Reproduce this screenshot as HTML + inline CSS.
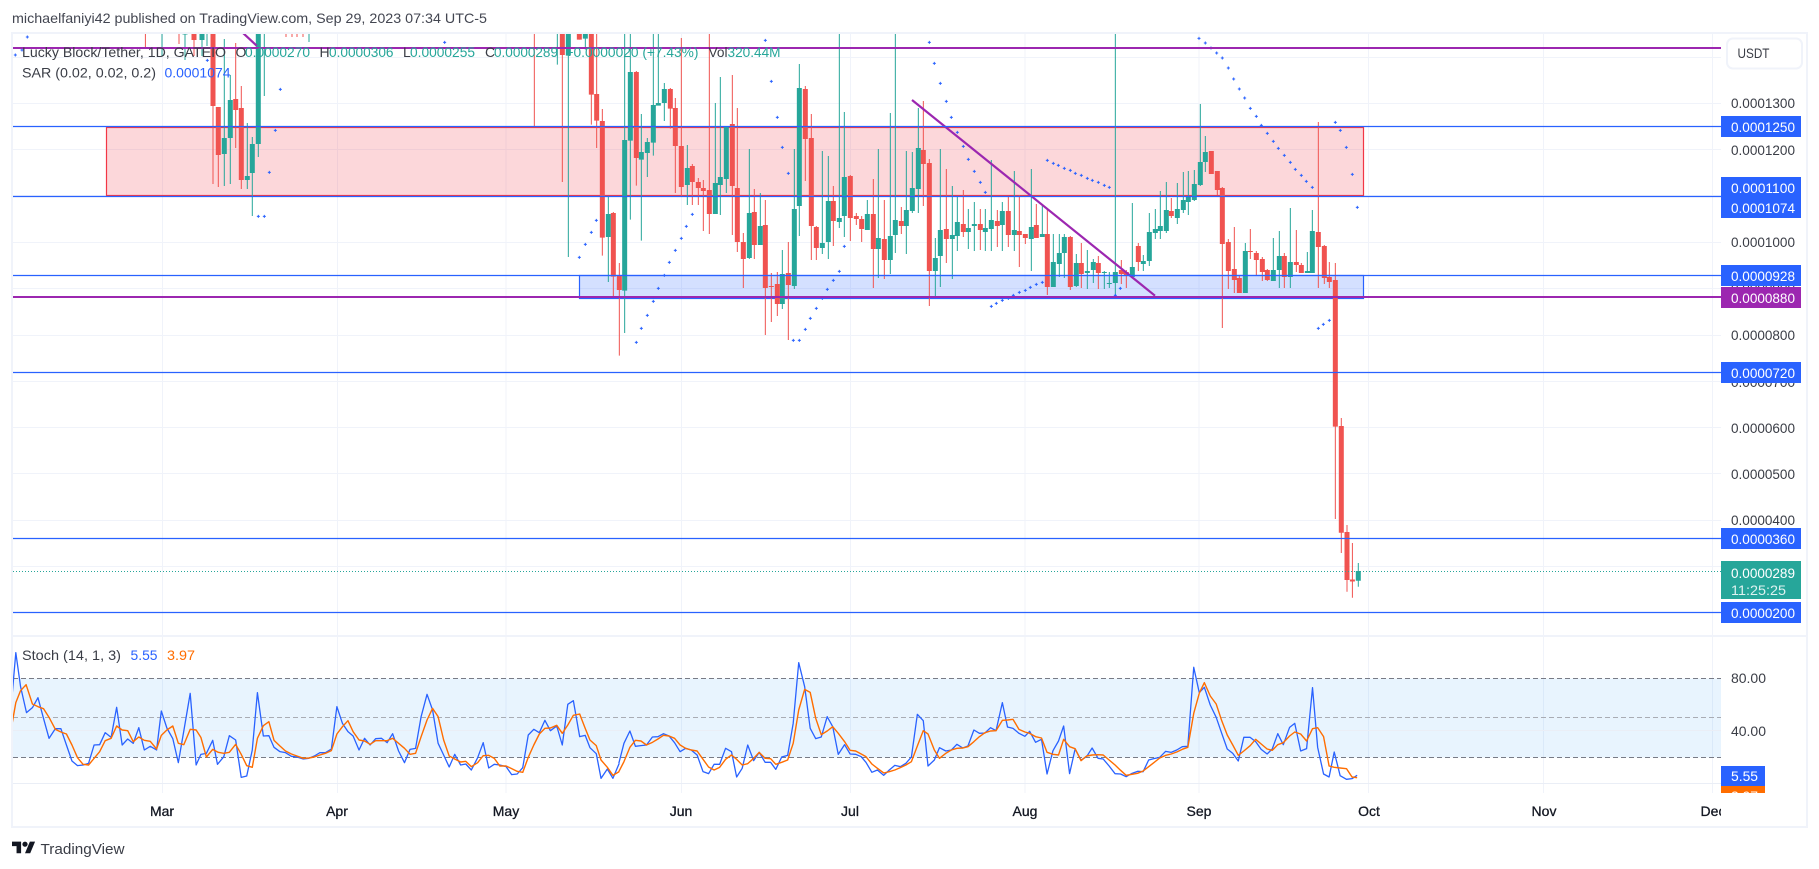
<!DOCTYPE html>
<html lang="en">
<head>
<meta charset="utf-8">
<title>Lucky Block/Tether chart</title>
<style>
html,body{margin:0;padding:0;background:#fff;width:1819px;height:869px;overflow:hidden}
svg{display:block}
text{font-family:"Liberation Sans",sans-serif;font-size:14px}
.ax{fill:#3a3d46}
.lb{fill:#fff}
.tm{fill:#131722;text-anchor:middle;stroke:#131722;stroke-width:.3}
.lg{fill:#3a3d46}
.gn{fill:#26a69a}
.c{fill:none}
.w{stroke-width:3}
.b{stroke-width:15}
.g{stroke:#26a69a}
.r{stroke:#f05350}
.d{fill:none;stroke:none;marker-start:url(#p);marker-mid:url(#p);marker-end:url(#p)}
.sb{fill:none;stroke:#2962ff;stroke-width:1.3;vector-effect:non-scaling-stroke;stroke-linejoin:round}
.so{fill:none;stroke:#ff6d00;stroke-width:1.4;vector-effect:non-scaling-stroke;stroke-linejoin:round}
</style>
</head>
<body>
<svg width="1819" height="869" viewBox="0 0 1819 869" xmlns="http://www.w3.org/2000/svg">
<defs>
<marker id="p" markerUnits="userSpaceOnUse" markerWidth="12" markerHeight="12" refX="6" refY="6" viewBox="0 0 12 12"><path d="M1.5 6h9M6 1.5v9" stroke="#2962ff" stroke-width="3" fill="none"/></marker>
<clipPath id="cp"><rect x="13" y="34" width="1708" height="601"/></clipPath>
<clipPath id="st"><rect x="13" y="637" width="1708" height="156"/></clipPath>
<clipPath id="dec"><rect x="1690" y="795" width="31" height="30"/></clipPath>
<clipPath id="or"><rect x="1721" y="786" width="44" height="7"/></clipPath>
</defs>

<rect width="1819" height="869" fill="#fff"/>

<text x="12" y="23" fill="#434651" textLength="475" lengthAdjust="spacingAndGlyphs">michaelfaniyi42 published on TradingView.com, Sep 29, 2023 07:34 UTC-5</text>

<!-- grid -->
<g stroke="#f0f3fa" stroke-width="1" fill="none">
<path d="M162.5 34V635M337.5 34V635M506 34V635M681.5 34V635M850.5 34V635M1025 34V635M1199 34V635M1368.5 34V635M1543.5 34V635M1712.5 34V635"/>
<path d="M162.5 637V793M337.5 637V793M506 637V793M681.5 637V793M850.5 637V793M1025 637V793M1199 637V793M1368.5 637V793M1543.5 637V793M1712.5 637V793"/>
<path d="M13 57.5H1721M13 103.5H1721M13 149.5H1721M13 195.5H1721M13 242.5H1721M13 288.5H1721M13 335.5H1721M13 381.5H1721M13 427.5H1721M13 473.5H1721M13 520.5H1721M13 566.5H1721"/>
</g>

<g clip-path="url(#cp)">
<!-- filled zones sit beneath the candles -->
<rect x="106.5" y="127.5" width="1257" height="68" fill="#f23645" fill-opacity=".2" stroke="#f23645" stroke-width="1.2"/>
<rect x="579.5" y="275.5" width="784" height="23" fill="#2962ff" fill-opacity=".2" stroke="#2962ff" stroke-width="1.2"/>

<!-- candles -->
<g fill="none">
<path stroke="#f05350" stroke-width="1" d="M145.4 33V49M179 33V44M194 33V56M213 33V184M218.3 107V187M235.7 43V148M241.3 86V189M286 33V37M292 33V37M297 33V37M303 33V37M1341.3 418V553M1347 525V591.7M1352.4 543V597.7"/>
<path stroke="#26a69a" stroke-width="1" d="M162 33V56M185 33V60M202 33V56M207 33V46M224.3 39V186M230.3 75V184M247.3 123V189M252.3 137V216M258.3 33V157M264.3 33V96M309 33V42M1358.3 563V586.7"/>
<path stroke="#f05350" stroke-width="5" d="M194 33V40M213 33V106M218.3 107V155M235.7 99V110M241.3 108V180M1341.3 426V532.7M1347 532V580M1352.4 579.5V581.5"/>
<path stroke="#26a69a" stroke-width="5" d="M185 33V34.5M202 33V40M224.3 138V154M230.3 100V138M247.3 176V180M252.3 144V173M258.3 33V144M1358.3 571V580.7"/>
</g>
<g transform="translate(530,33) scale(.33333)" class="c">
<path class="w g" d="M82 0V95M115 0V672M166 0V50M235 490V747M284 0V900M301 0V560M334 243V623M352 315V432M370 0V368M385 0V215M403 150V264M472 336V516M556 210V543M571 132V546M589 282V480M658 348V678M691 480V636M757 651V828M793 348V768M808 93V609M877 354V663M895 369V678M928 0V585M943 237V612"/>
<path class="w r" d="M13 0V280M97 0V447M148 0V20M184 0V275M200 0V345M217 228V668M250 537V790M268 690V968M319 114V458M421 165V287M436 195V480M454 15V490M487 393V516M505 435V516M520 441V594M538 0V603M607 126V606M622 225V657M640 600V765M673 468V678M706 501V906M724 720V867M742 717V849M775 627V921M826 159V444M844 243V681M859 579V681M910 459V639M961 426V624M979 540V576"/>
<path class="b g" d="M115 0V68M166 0V17M235 543V612M284 321V773M301 117V323M334 357V380M352 327V360M370 216V329M385 210V218M403 168V210M472 405V456M556 450V543M571 432V456M589 282V438M658 540V675M691 579V636M757 723V813M793 528V759M808 165V519M877 630V645M895 504V627M928 555V567M943 432V549"/>
<path class="b r" d="M97 0V66M148 0V20M184 0V185M200 183V263M217 264V614M250 540V731M268 726V771M319 117V375M421 168V227M436 225V339M454 339V462M487 399V447M505 447V465M520 465V474M538 471V543M607 273V459M622 465V627M640 627V678M673 537V636M706 576V765M724 759V762M742 753V813M775 720V756M826 168V318M844 315V579M859 582V645M910 504V564M961 429V555M979 549V558"/>
</g>
<g transform="translate(860,33) scale(.33333)" class="c">
<path class="w g" d="M22 501V591M55 348V735M91 240V723M106 0V660M139 354V663M157 357V540M175 225V540M226 615V789M241 348V762M277 459V738M292 490V654M325 528V648M343 507V654M376 528V654M394 381V654M427 507V654M463 414V654M514 408V714M547 519V612M580 603V762M598 603V732M613 603V735M649 663V762M682 651V768M700 678V750M733 714V768M748 717V765M766 0V792M817 510V735M850 666V714M868 540V699M886 528V618M901 474V618M919 447V600M952 450V573M985 414V546"/>
<path class="w r" d="M5 549V627M40 438V765M73 501V738M124 522V603M190 204V519M208 378V819M259 408V690M310 471V612M361 528V651M412 531V642M445 491V642M478 486V702M496 603V633M529 513V615M562 530V786M631 609V771M664 630V765M715 669V768M784 681V753M799 711V765M835 630V714M934 495V555"/>
<path class="b g" d="M22 543V591M55 615V648M91 609V681M106 561V606M139 531V579M157 465V534M175 345V468M226 675V714M241 591V669M277 606V618M292 567V609M325 585V597M343 573V579M376 585V597M394 561V588M427 534V576M463 591V606M514 582V618M547 603V612M580 687V762M598 660V693M613 612V660M649 690V759M682 714V720M700 687V711M733 717V720M748 750V753M766 717V750M817 702V732M850 684V693M868 597V684M886 588V600M901 579V594M919 531V594M952 528V555M985 489V507"/>
<path class="b r" d="M5 558V588M40 543V648M73 618V681M124 564V579M190 351V393M208 390V714M259 588V618M310 573V597M361 573V591M412 564V579M445 534V606M478 594V606M496 603V615M529 576V615M562 603V762M631 612V762M664 690V723M715 690V720M784 711V723M799 717V729M835 639V687M934 534V549"/>
</g>
<g transform="translate(1180,100) scale(.33333)" class="c">
<path class="w g" d="M10 216V339M43 210V303M61 12V258M76 108V216M196 429V579M280 414V543M298 393V564M331 324V564M382 456V519M397 330V519"/>
<path class="w r" d="M94 153V222M112 213V285M127 261V684M145 417V567M163 381V579M178 528V579M211 387V477M229 453V525M247 471V543M262 507V543M313 459V564M349 390V516M364 489V519M415 66V564M433 435V552M448 486V564M466 489V1257"/>
<path class="b g" d="M10 300V330M43 252V300M61 186V255M76 156V186M196 453V579M280 510V543M298 468V510M331 486V531M382 513V519M397 393V519"/>
<path class="b r" d="M94 153V222M112 213V270M127 264V432M145 426V513M163 507V540M178 534V579M211 453V456M229 459V480M247 477V516M262 510V540M313 468V531M349 486V495M364 495V519M415 396V441M433 438V534M448 531V546M466 540V980"/>
</g>

<!-- SAR -->
<g transform="scale(.33333)"><path class="d" d="M82 111 46 165 66 150 1334 127 3597 115 3616 129 3633 144 3650 159 3667 174 3685 204 3701 237 3718 267 3734 294"/></g>
<g transform="translate(200,33) scale(.33333)"><path class="d" d="M241 169 226 292 208 418 175 550 193 550 22 82"/></g>
<g transform="translate(530,33) scale(.33333)"><path class="d" d="M706 22 724 145 742 253 757 343 775 421 199 562 184 598 166 634 148 673 403 727 385 766 370 805 352 847 334 886 319 928 487 544 469 580 454 616 436 652 418 688 943 640 928 715 910 742 892 769 877 796 859 826 841 856 826 889 808 922 790 922"/></g>
<g transform="translate(860,33) scale(.33333)"><path class="d" d="M208 28 223 91 241 151 259 205 274 253 292 298 310 340 325 379 343 415 361 448 376 478 562 382 580 391 595 397 613 406 631 412 646 421 664 427 682 436 697 442 715 448 733 457 748 463 781 766 766 787 547 748 529 754 511 763 496 772 478 778 460 787 445 796 427 802 409 811 394 820"/></g>
<g transform="translate(1180,100) scale(.33333)"><path class="d" d="M211 25 229 49 244 76 262 100 280 124 295 145 313 166 331 187 346 208 364 226 379 244 397 262 466 67 481 91 499 142 517 223 532 322 415 685 430 673 448 661"/></g>

<!-- trend line -->
<path d="M912 100 1155 295.7M243 33 256.7 45.7" stroke="#9c27b0" stroke-width="2.2" fill="none"/>
</g>

<g fill="none">
<path d="M13 126.5H1721M13 196.5H1721M13 275.5H1721M13 372.5H1721M13 538.5H1721M13 612.5H1721" stroke="#2962ff" stroke-width="1.2"/>
<path d="M13 48H1721M13 297H1721" stroke="#9c27b0" stroke-width="2"/>
<path d="M13 571.5H1721" stroke="#26a69a" stroke-width="1" stroke-dasharray="1 2"/>
</g>

<!-- legend -->
<text x="22" y="57" class="lg" textLength="204" lengthAdjust="spacingAndGlyphs">Lucky Block/Tether, 1D, GATEIO</text>
<text x="235.5" y="57" class="lg">O</text><text x="245" y="57" class="gn" textLength="65" lengthAdjust="spacingAndGlyphs">0.0000270</text>
<text x="319.5" y="57" class="lg">H</text><text x="329" y="57" class="gn" textLength="64.5" lengthAdjust="spacingAndGlyphs">0.0000306</text>
<text x="403" y="57" class="lg">L</text><text x="410" y="57" class="gn" textLength="65" lengthAdjust="spacingAndGlyphs">0.0000255</text>
<text x="485" y="57" class="lg">C</text><text x="494" y="57" class="gn" textLength="64" lengthAdjust="spacingAndGlyphs">0.0000289</text>
<text x="565.5" y="57" class="gn" textLength="133" lengthAdjust="spacingAndGlyphs">+0.0000020 (+7.43%)</text>
<text x="708.5" y="57" class="lg" textLength="19" lengthAdjust="spacingAndGlyphs">Vol</text><text x="727.5" y="57" class="gn" textLength="53" lengthAdjust="spacingAndGlyphs">320.44M</text>
<text x="22" y="77.5" class="lg" textLength="134" lengthAdjust="spacingAndGlyphs">SAR (0.02, 0.02, 0.2)</text>
<text x="164.5" y="77.5" fill="#2962ff" textLength="66" lengthAdjust="spacingAndGlyphs">0.0001074</text>

<!-- stoch pane -->
<rect x="13" y="678.5" width="1708" height="79" fill="#2196f3" fill-opacity=".1"/>
<path d="M13 730.5H1721M13 783.5H1721" stroke="#eaeef6" stroke-width="1" fill="none"/>
<path d="M13 678.5H1721M13 757.5H1721" stroke="#787b86" stroke-width="1" stroke-dasharray="5 3" fill="none"/>
<path d="M13 717.5H1721" stroke="#a9acb4" stroke-width="1" stroke-dasharray="5 3" fill="none"/>
<g clip-path="url(#st)">
<g transform="translate(0,630) scale(.39541,.33333)">
<polyline class="sb" points="30,205 40,68 52,170 67,248 82,233 96,203 110,265 124,325 140,296 154,296 168,345 182,393 196,407 210,405 224,400 238,345 252,344 266,308 281,322 295,232 309,345 323,327 337,340 351,293 365,360 380,349 396,360 408,243 422,294 437,326 451,398 465,302 481,190 496,405 508,373 522,370 538,331 550,403 566,380 580,317 596,330 610,442 624,438 638,360 651,188 666,318 680,317 693,352 708,365 722,368 737,379 751,381 767,387 781,385 795,378 809,368 823,368 838,357 852,230 866,280 880,305 893,318 908,360 922,325 936,345 950,326 965,325 979,338 993,311 1008,363 1023,398 1037,358 1051,355 1065,260 1080,193 1094,240 1108,340 1122,375 1136,411 1150,373 1165,405 1178,402 1192,420 1208,383 1222,338 1236,414 1250,403 1264,405 1280,410 1294,434 1308,432 1322,413 1336,315 1350,298 1364,308 1378,271 1392,302 1408,288 1422,345 1436,223 1450,212 1466,320 1480,316 1492,353 1508,371 1520,445 1536,417 1550,445 1566,400"/>
<polyline class="so" points="30,285 40,218 52,182 66,164 82,222 96,230 110,236 124,262 140,298 154,306 168,312 182,345 196,383 210,403 224,405 238,385 252,365 266,332 281,325 295,288 309,300 323,302 337,335 351,321 365,331 380,334 396,357 408,316 422,300 437,288 451,340 465,344 481,298 496,300 508,322 522,381 538,358 552,367 566,370 580,367 596,343 610,373 624,407 638,412 651,325 666,287 680,275 693,331 708,348 722,363 737,372 751,378 767,385 781,384 795,381 809,375 823,370 838,362 852,312 866,290 880,272 893,305 908,330 922,333 936,343 950,332 965,332 979,332 993,325 1008,340 1023,355 1037,373 1051,370 1065,320 1080,270 1094,235 1108,260 1122,330 1136,378 1150,387 1165,396 1178,394 1192,410 1208,398 1222,377 1236,376 1250,385 1264,408 1280,408 1294,416 1308,424 1322,427 1336,382 1350,345 1364,312 1378,295 1392,294 1408,286 1422,310 1436,285 1450,256 1466,252 1480,295 1492,330 1508,347 1520,390 1536,412 1550,436 1566,425"/>
</g>
<g transform="translate(620,630) scale(.39541,.33333)">
<polyline class="sb" points="-3,400 10,340 25,303 39,349 53,347 67,345 82,321 96,320 110,311 124,318 138,338 152,365 166,355 180,360 195,375 210,425 224,431 238,403 252,403 267,355 282,365 295,441 309,415 323,345 338,392 352,367 367,397 381,397 394,418 409,381 424,376 438,280 452,98 467,170 481,295 495,326 509,321 524,260 538,290 552,373 568,344 582,372 596,373 610,380 622,397 637,427 651,420 667,436 681,420 695,406 709,410 723,400 737,381 752,253 767,272 779,408 795,390 808,353 824,363 838,360 852,343 867,354 880,348 895,300 909,310 923,309 937,293 951,302 967,218 980,291 994,295 1009,310 1024,319 1036,304 1051,337 1066,328 1080,432 1095,362 1109,333 1122,288 1137,431 1151,357 1166,390 1180,380 1194,354 1209,385 1222,387 1237,408 1252,431 1266,432 1280,440 1295,430 1309,424 1323,425 1337,390 1350,386 1365,382 1380,364 1394,367 1408,360 1422,350 1436,349 1451,112 1465,188"/>
<polyline class="so" points="-3,425 10,395 25,352 39,331 53,333 67,345 82,337 96,327 110,316 124,318 138,325 152,345 166,355 180,360 195,363 210,388 224,411 238,420 252,412 267,388 282,375 295,388 309,405 323,401 338,385 352,367 367,385 381,386 394,403 409,397 424,390 438,340 452,240 467,178 481,187 495,265 509,314 524,303 538,290 552,310 568,335 582,361 596,363 610,372 622,380 637,402 651,415 667,429 681,425 695,420 709,413 723,405 737,395 752,348 767,302 779,312 795,360 808,385 824,370 838,360 852,355 867,354 880,350 895,335 909,320 923,308 937,303 951,302 967,271 980,270 994,268 1009,298 1024,306 1036,310 1051,320 1066,324 1080,367 1095,373 1109,375 1122,328 1137,350 1151,356 1166,392 1180,378 1194,375 1209,374 1222,375 1237,390 1252,405 1266,421 1280,436 1295,433 1309,430 1323,423 1337,410 1350,398 1365,384 1380,376 1394,372 1408,366 1422,358 1436,352 1451,250 1465,190"/>
</g>
<g transform="translate(1200,630) scale(.39479,.33333)">
<polyline class="sb" points="-2,188 11,172 26,225 41,262 55,310 69,357 83,370 97,393 111,322 127,322 141,335 155,358 170,372 183,357 197,311 211,344 227,292 240,280 255,363 270,356 285,173 298,352 313,432 327,441 340,366 355,437 371,448 385,446 398,436"/>
<polyline class="so" points="-2,190 11,158 26,198 41,222 55,272 69,315 83,345 97,376 111,363 127,347 141,328 155,342 170,357 183,361 197,344 211,338 227,318 240,306 255,312 270,333 285,296 298,293 313,320 327,408 340,412 355,414 371,416 385,441 398,443"/>
</g>
</g>
<text x="22" y="660" class="lg" textLength="99" lengthAdjust="spacingAndGlyphs">Stoch (14, 1, 3)</text>
<text x="130.5" y="660" fill="#2962ff" textLength="27" lengthAdjust="spacingAndGlyphs">5.55</text>
<text x="167" y="660" fill="#ff6d00" textLength="28" lengthAdjust="spacingAndGlyphs">3.97</text>

<!-- axes -->
<rect x="1721" y="34" width="85" height="759" fill="#fff"/>
<rect x="1727" y="38.5" width="75" height="30" rx="6" fill="#fff" stroke="#f0f3fa" stroke-width="2"/>
<text x="1737.5" y="58" fill="#3a3d46" textLength="32" lengthAdjust="spacingAndGlyphs">USDT</text>

<g class="ax">
<text x="1731" y="108" textLength="64" lengthAdjust="spacingAndGlyphs">0.0001300</text>
<text x="1731" y="155" textLength="64" lengthAdjust="spacingAndGlyphs">0.0001200</text>
<text x="1731" y="247" textLength="64" lengthAdjust="spacingAndGlyphs">0.0001000</text>
<text x="1731" y="293" textLength="64" lengthAdjust="spacingAndGlyphs">0.0000900</text>
<text x="1731" y="340" textLength="64" lengthAdjust="spacingAndGlyphs">0.0000800</text>
<text x="1731" y="387" textLength="64" lengthAdjust="spacingAndGlyphs">0.0000700</text>
<text x="1731" y="433" textLength="64" lengthAdjust="spacingAndGlyphs">0.0000600</text>
<text x="1731" y="479" textLength="64" lengthAdjust="spacingAndGlyphs">0.0000500</text>
<text x="1731" y="525" textLength="64" lengthAdjust="spacingAndGlyphs">0.0000400</text>
<text x="1731" y="683" textLength="35" lengthAdjust="spacingAndGlyphs">80.00</text>
<text x="1731" y="736" textLength="35" lengthAdjust="spacingAndGlyphs">40.00</text>
</g>

<rect x="1721" y="116" width="80" height="21" fill="#2962ff"/>
<rect x="1721" y="177" width="80" height="41" fill="#2962ff"/>
<rect x="1721" y="265" width="80" height="21" fill="#2962ff"/>
<rect x="1721" y="287" width="80" height="21" fill="#9c27b0"/>
<rect x="1721" y="362" width="80" height="21" fill="#2962ff"/>
<rect x="1721" y="528" width="80" height="21" fill="#2962ff"/>
<rect x="1721" y="561" width="80" height="38" fill="#26a69a"/>
<rect x="1721" y="602" width="80" height="21" fill="#2962ff"/>
<g class="lb">
<text x="1731" y="132" textLength="64" lengthAdjust="spacingAndGlyphs">0.0001250</text>
<text x="1731" y="193" textLength="64" lengthAdjust="spacingAndGlyphs">0.0001100</text>
<text x="1731" y="213" textLength="64" lengthAdjust="spacingAndGlyphs">0.0001074</text>
<text x="1731" y="281" textLength="64" lengthAdjust="spacingAndGlyphs">0.0000928</text>
<text x="1731" y="303" textLength="64" lengthAdjust="spacingAndGlyphs">0.0000880</text>
<text x="1731" y="378" textLength="64" lengthAdjust="spacingAndGlyphs">0.0000720</text>
<text x="1731" y="544" textLength="64" lengthAdjust="spacingAndGlyphs">0.0000360</text>
<text x="1731" y="578" textLength="64" lengthAdjust="spacingAndGlyphs">0.0000289</text>
<text x="1731" y="595" textLength="55" lengthAdjust="spacingAndGlyphs" fill-opacity=".85">11:25:25</text>
<text x="1731" y="618" textLength="64" lengthAdjust="spacingAndGlyphs">0.0000200</text>
</g>
<rect x="1721" y="766" width="44" height="20" fill="#2962ff"/>
<rect x="1721" y="786" width="44" height="7" fill="#ff6d00"/>
<text x="1731" y="781" class="lb" textLength="27" lengthAdjust="spacingAndGlyphs">5.55</text>
<text x="1731" y="801" fill="#fff" textLength="27" lengthAdjust="spacingAndGlyphs" clip-path="url(#or)">3.97</text>

<!-- time axis -->
<text x="162" y="816" class="tm">Mar</text>
<text x="337" y="816" class="tm">Apr</text>
<text x="506" y="816" class="tm">May</text>
<text x="681" y="816" class="tm">Jun</text>
<text x="850" y="816" class="tm">Jul</text>
<text x="1025" y="816" class="tm">Aug</text>
<text x="1199" y="816" class="tm">Sep</text>
<text x="1369" y="816" class="tm">Oct</text>
<text x="1544" y="816" class="tm">Nov</text>
<text x="1713" y="816" class="tm" clip-path="url(#dec)">Dec</text>

<!-- frame -->
<path d="M12 33H1807V827H12ZM12 636H1807" fill="none" stroke="#f0f3fa" stroke-width="2"/>

<!-- logo -->
<g transform="translate(12,839) scale(.65)" fill="#131722">
<path d="M14 22H7V11H0V4h14v18zM28 22h-8l7.5-18h8L28 22z"/>
<circle cx="20" cy="8" r="4"/>
</g>
<text x="40.5" y="854" fill="#3a3d46" style="font-size:15px" textLength="84" lengthAdjust="spacingAndGlyphs">TradingView</text>
</svg>
</body>
</html>
